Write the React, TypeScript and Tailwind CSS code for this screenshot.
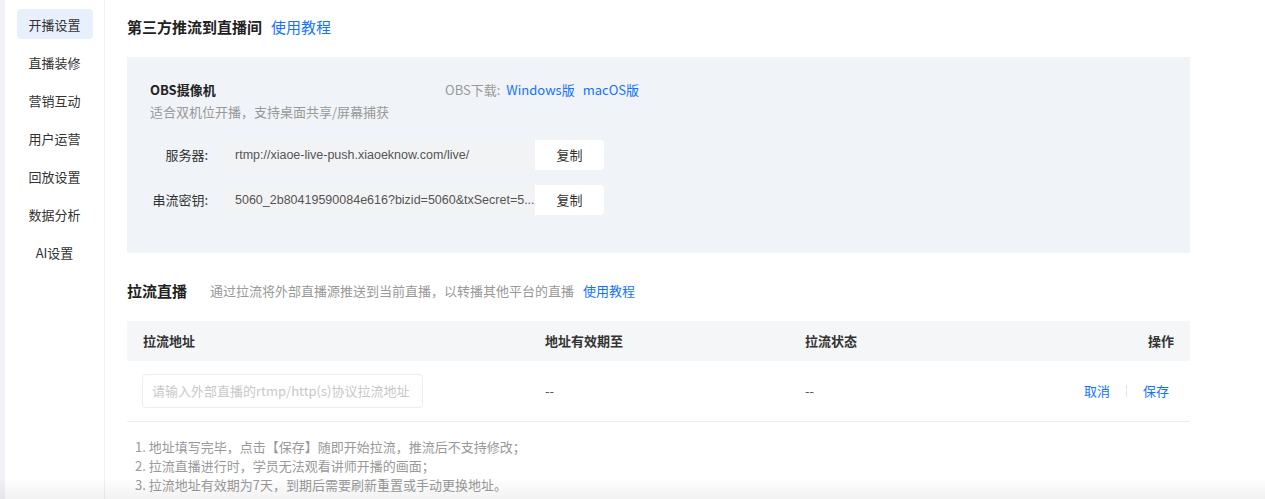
import React from 'react'

const NAV = ['开播设置', '直播装修', '营销互动', '用户运营', '回放设置', '数据分析', 'AI设置']

const FONT = { fontFamily: '"Noto Sans CJK SC", "Noto Sans", sans-serif' }
const LATIN = { fontFamily: '"Liberation Sans", "Noto Sans CJK SC", sans-serif' }

function CopyRow({ label, value }: { label: string; value: string }) {
  return (
    <div className="flex items-center h-[30px]">
      <span className="w-[81px] text-right text-[13px] text-[#333]">{label}</span>
      <div className="ml-[15px] flex h-full rounded-[4px] overflow-hidden">
        <div
          className="w-[312px] bg-[#f2f3f5] flex items-center px-[12px] text-[12.5px] text-[#555] whitespace-nowrap overflow-hidden"
          style={LATIN}
        >
          {value}
        </div>
        <button className="w-[69px] bg-white text-[13px] text-[#333]">复制</button>
      </div>
    </div>
  )
}

export default function App() {
  return (
    <div className="h-[499px] w-[1265px] flex bg-white overflow-hidden relative" style={FONT}>
      <div className="w-[5px] bg-[#f0f2f5] shrink-0" />
      {/* Sidebar */}
      <aside className="w-[100px] shrink-0 border-r border-[#eef0f3] pt-[9px] flex flex-col items-center">
        {NAV.map((n, i) => (
          <div
            key={n}
            className={`w-[76px] h-[30px] mb-[8px] pt-[1px] flex items-center justify-center rounded-[4px] text-[13px] text-[#333]
              ${i === 0 ? 'bg-[#e8f0fd]' : ''}`}
          >
            {n}
          </div>
        ))}
      </aside>

      <main className="flex-1 pl-[22px] pr-[75px]">
        <div className="h-[52px] flex items-center pt-[2px]">
          <span className="text-[15px] font-semibold text-[#222]">第三方推流到直播间</span>
          <span className="ml-[9px] text-[15px] text-[#1472ff]">使用教程</span>
        </div>

        <div className="mt-[5px] h-[196px] bg-[#f0f3f8] pl-[23px] pt-[22px]">
          <div className="flex items-center h-[22px]">
            <span className="w-[295px] text-[13px] font-semibold text-[#222]">OBS摄像机</span>
            <span className="text-[13px] text-[#999]">OBS下载:</span>
            <span className="ml-[6px] text-[13px] text-[#1472ff]">Windows版</span>
            <span className="ml-[8px] text-[13px] text-[#1472ff]">macOS版</span>
          </div>
          <div className="h-[22px] flex items-center text-[13px] text-[#999]">适合双机位开播，支持桌面共享/屏幕捕获</div>
          <div className="mt-[17px] flex flex-col gap-[15px] -ml-[23px]">
            <CopyRow label="服务器:" value="rtmp://xiaoe-live-push.xiaoeknow.com/live/" />
            <CopyRow label="串流密钥:" value="5060_2b80419590084e616?bizid=5060&txSecret=5..." />
          </div>
        </div>

        <div className="h-[68px] flex items-center pt-[8px]">
          <span className="text-[15px] font-semibold text-[#222]">拉流直播</span>
          <span className="ml-[23px] text-[13px] text-[#999]">通过拉流将外部直播源推送到当前直播，以转播其他平台的直播</span>
          <span className="ml-[9px] text-[13px] text-[#1472ff]">使用教程</span>
        </div>

        <div className="h-[40px] bg-[#f5f6f7] flex items-center text-[13px] font-semibold text-[#333] px-[16px]">
          <span className="w-[402px]">拉流地址</span>
          <span className="w-[260px]">地址有效期至</span>
          <span className="flex-1">拉流状态</span>
          <span>操作</span>
        </div>
        <div className="h-[61px] flex items-center border-b border-[#eeeeee] pl-[15px] pr-[21px] text-[13px]">
          <div className="w-[281px] h-[34px] border border-[#ececec] rounded-[4px] flex items-center px-[9px] text-[13px] text-[#c8c8c8] whitespace-nowrap overflow-hidden">
            请输入外部直播的rtmp/http(s)协议拉流地址
          </div>
          <span className="ml-[122px] w-[260px] text-[#555]">--</span>
          <span className="flex-1 text-[#555]">--</span>
          <span className="text-[#1472ff]">取消</span>
          <span className="mx-[16px] w-px h-[12px] bg-[#e5e5e5]" />
          <span className="text-[#1472ff]">保存</span>
        </div>

        <div className="pt-[15px] pl-[8px] text-[13px] text-[#999] leading-[19px]">
          <p>1. 地址填写完毕，点击【保存】随即开始拉流，推流后不支持修改；</p>
          <p>2. 拉流直播进行时，学员无法观看讲师开播的画面；</p>
          <p>3. 拉流地址有效期为7天，到期后需要刷新重置或手动更换地址。</p>
        </div>
      </main>

      <div className="absolute left-0 right-0 bottom-0 h-[22px] bg-gradient-to-b from-transparent to-[#0000000d] pointer-events-none" />
    </div>
  )
}
